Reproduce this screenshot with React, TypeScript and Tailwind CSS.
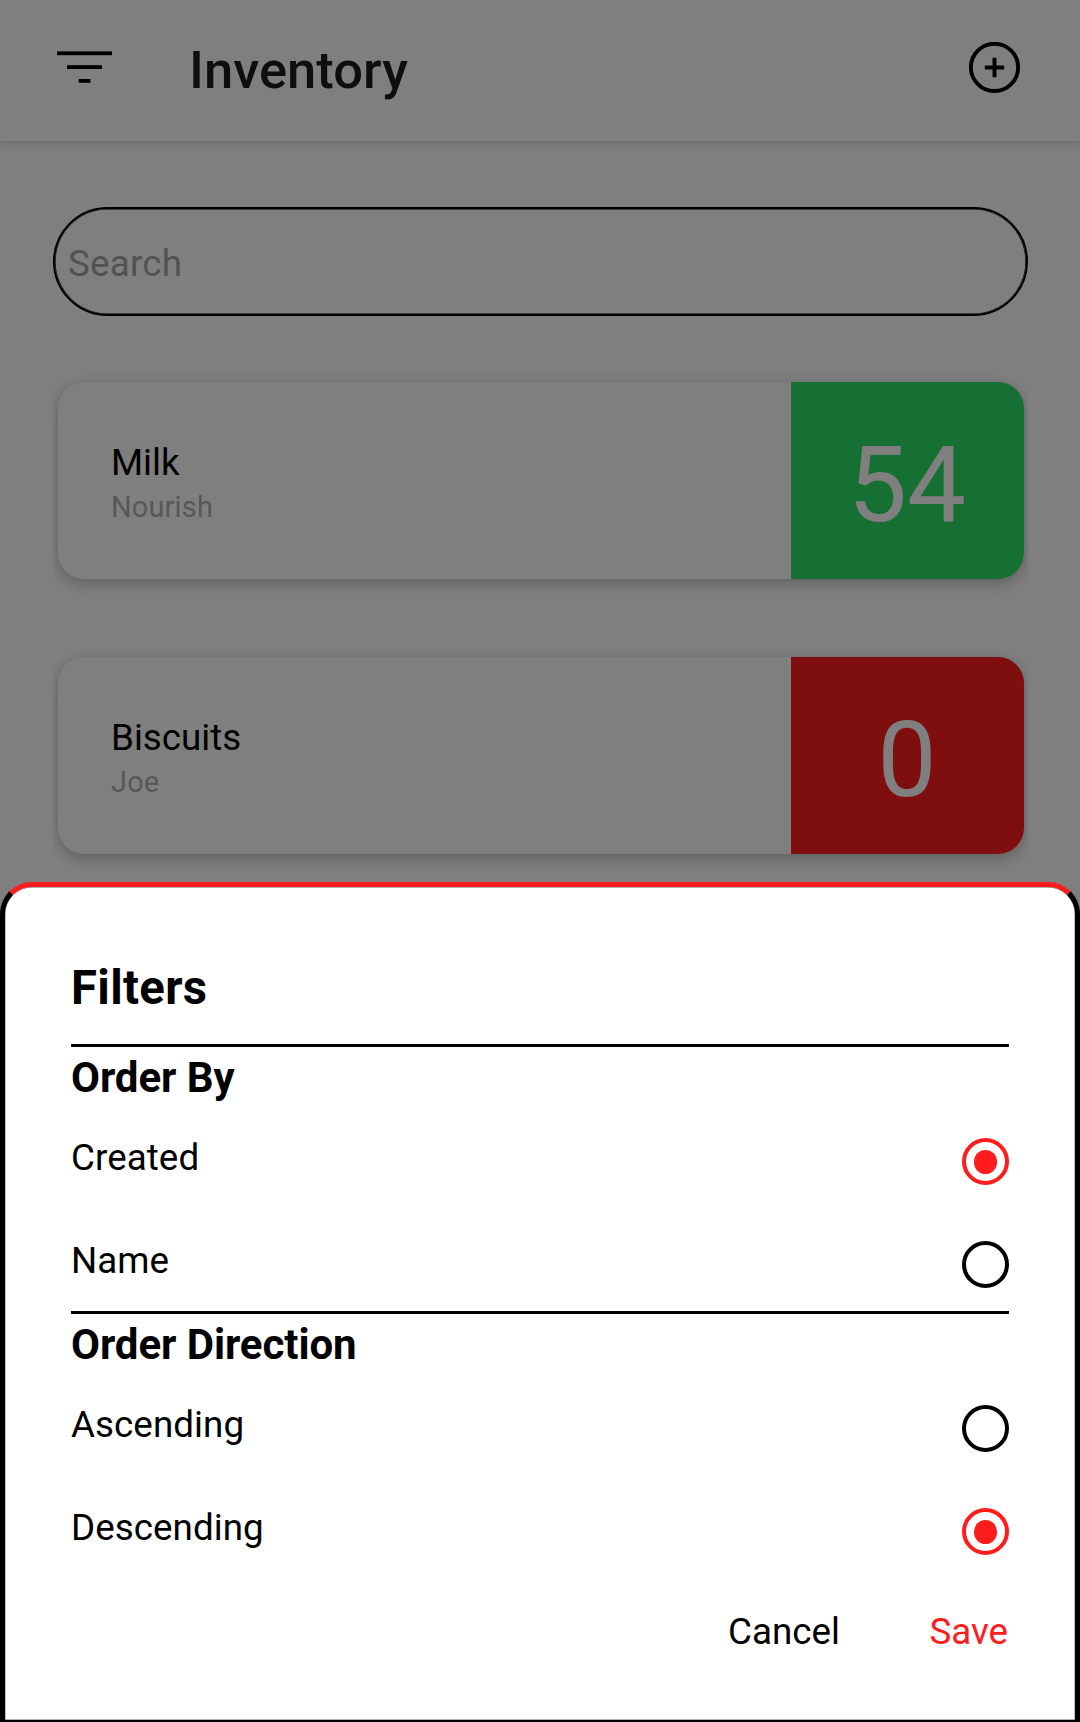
import React from "react";

type Item = { name: string; owner: string; count: number; tone: string };

const items: Item[] = [
  { name: "Milk", owner: "Nourish", count: 54, tone: "bg-[#2fe066]" },
  { name: "Biscuits", owner: "Joe", count: 0, tone: "bg-[#fc1e1c]" },
];

function FilterIcon() {
  return (
    <svg width="56" height="34" viewBox="0 0 56 34" fill="black">
      <rect x="0" y="0.4" width="55" height="3.8" />
      <rect x="10" y="14.2" width="35" height="3.8" />
      <rect x="21.7" y="28" width="11.7" height="3.8" />
    </svg>
  );
}

function AddIcon() {
  return (
    <svg width="52" height="52" viewBox="0 0 52 52" fill="none" stroke="black" strokeWidth="3.9">
      <circle cx="25.5" cy="25.4" r="23.6" />
      <path d="M15.8 25.5h19.4M25.5 15.8v19.4" />
    </svg>
  );
}

function ItemCard({ item }: { item: Item }) {
  return (
    <div className="mr-1 ml-[5px] flex h-[197px] rounded-[26px] bg-white shadow-[0_5px_16px_rgba(0,0,0,0.24),0_0_4px_rgba(0,0,0,0.05)]">
      <div className="flex-1 pt-[60px] pl-[53px]">
        <div className="text-[36.75px] leading-[42px]">{item.name}</div>
        <div className="mt-[6px] text-[28.9px] leading-[34px] tracking-[0.2px] text-[#b0b0b0]">
          {item.owner}
        </div>
      </div>
      <div
        className={`flex w-[233px] items-center justify-center rounded-r-[26px] text-[105px] leading-[123px] text-white ${item.tone}`}
      >
        <span className="pt-[9px] pr-px">{item.count}</span>
      </div>
    </div>
  );
}

function Option({ label, selected }: { label: string; selected?: boolean }) {
  return (
    <div className="flex h-[47px] items-start justify-between">
      <span className="text-[36.75px] leading-[39px] tracking-[0.06px]">{label}</span>
      <span
        className={`flex size-[47px] rounded-full border-4 pt-2 pl-[7.75px] ${
          selected ? "border-[#fe1c1c]" : "border-black"
        }`}
      >
        {selected && <span className="h-6 w-[23.5px] rounded-full bg-[#fe1c1c]" />}
      </span>
    </div>
  );
}

function Section({ title, children }: { title: string; children: React.ReactNode }) {
  return (
    <section className="border-t-[3px] border-black">
      <h3 className="text-[42px] leading-[61px] font-bold tracking-[-0.07px]">{title}</h3>
      <div className="mt-[30px] flex flex-col gap-14">{children}</div>
    </section>
  );
}

export default function App() {
  return (
    <div className="relative h-[1722px] w-[1080px] overflow-hidden bg-white font-['Roboto',sans-serif] text-black">
      <header className="flex h-[141px] items-start bg-white pr-[59px] pl-[57px] shadow-[0_2px_9px_rgba(0,0,0,0.18)]">
        <div className="pt-[51px]">
          <FilterIcon />
        </div>
        <h1 className="flex-1 pt-[39px] pl-[76px] text-[52.5px] leading-[62px] font-medium tracking-[0.04px] text-[#1c1c1e]">
          Inventory
        </h1>
        <div className="pt-[42px]">
          <AddIcon />
        </div>
      </header>

      <main className="mt-[66px] ml-[53px] w-[975px]">
        <div className="flex h-[109px] items-center rounded-full border-2 border-black pt-[5px] pl-[13px] text-[36.75px] tracking-[0.2px] text-[#a4a4a4] shadow-[inset_0_0_0_0.6px_black]">
          Search
        </div>
        <div className="mt-[26px] flex flex-col gap-[78px] overflow-hidden pt-10 pb-10">
          {items.map((item) => (
            <ItemCard key={item.name} item={item} />
          ))}
        </div>
      </main>

      <div className="absolute inset-0 bg-black/50" />

      <div className="absolute inset-x-0 top-[882px] bottom-0 rounded-t-[32px] border-[5px] border-b-2 border-black border-t-[#fe1c1c] bg-white px-[66px] pt-[73px] shadow-[inset_0_0_0_0.4px_rgba(0,0,0,0.6)]">
        <h2 className="mb-7 text-[47.25px] leading-[56px] font-bold tracking-[0.35px]">Filters</h2>
        <Section title="Order By">
          <Option label="Created" selected />
          <Option label="Name" />
        </Section>
        <div className="h-[23px]" />
        <Section title="Order Direction">
          <Option label="Ascending" />
          <Option label="Descending" selected />
        </Section>
        <div className="mt-[57px] mr-px flex justify-end gap-[89.5px] text-[36.75px] leading-[40px]">
          <button>Cancel</button>
          <button className="text-[#fe1c1c]">Save</button>
        </div>
      </div>
    </div>
  );
}
